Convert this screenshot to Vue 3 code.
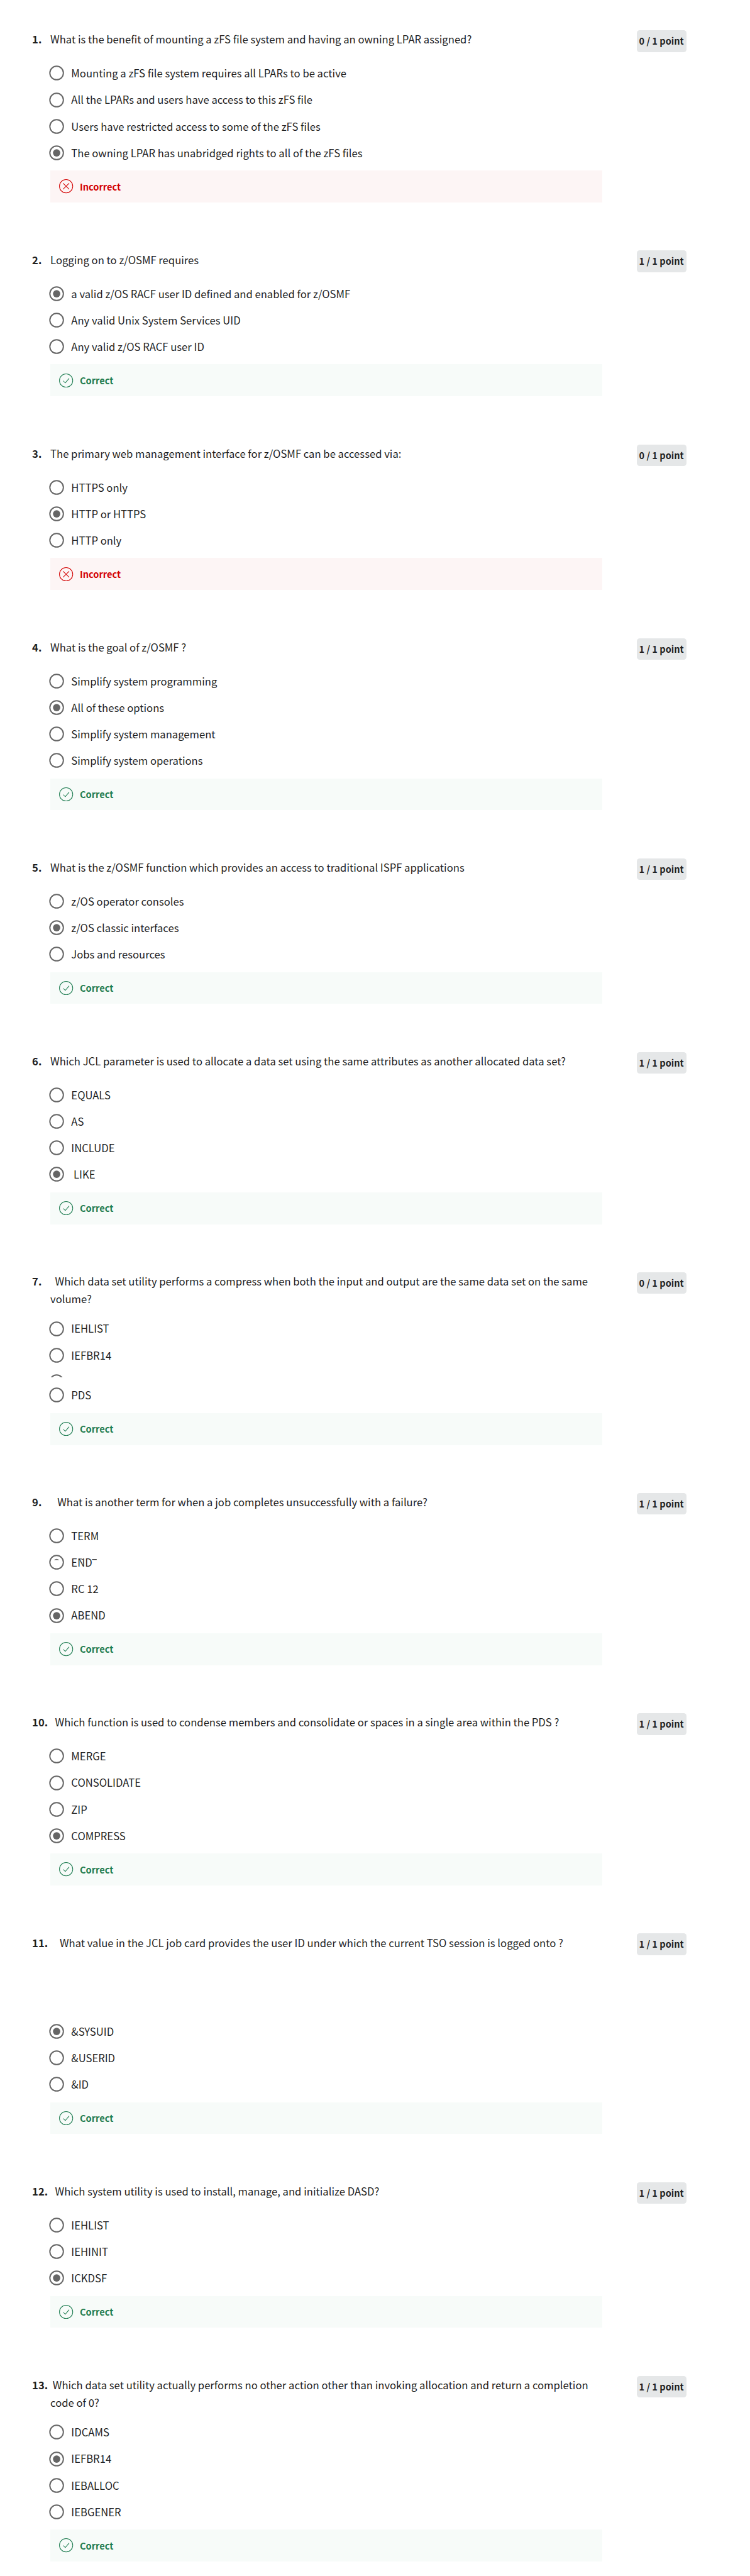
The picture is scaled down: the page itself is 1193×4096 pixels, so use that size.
<script setup>
const questions = [
  { n: 1, text: 'What is the benefit of mounting a zFS file system and having an owning LPAR assigned?', score: 0, picked: 3, ok: false,
    options: ['Mounting a zFS file system requires all LPARs to be active', 'All the LPARs and users have access to this zFS file', 'Users have restricted access to some of the zFS files', 'The owning LPAR has unabridged rights to all of the zFS files'] },
  { n: 2, text: 'Logging on to z/OSMF requires', score: 1, picked: 0, ok: true,
    options: ['a valid z/OS RACF user ID defined and enabled for z/OSMF', 'Any valid Unix System Services UID', 'Any valid z/OS RACF user ID'] },
  { n: 3, text: 'The primary web management interface for z/OSMF can be accessed via:', score: 0, picked: 1, ok: false,
    options: ['HTTPS only', 'HTTP or HTTPS', 'HTTP only'] },
  { n: 4, text: 'What is the goal of z/OSMF ?', score: 1, picked: 1, ok: true,
    options: ['Simplify system programming', 'All of these options', 'Simplify system management', 'Simplify system operations'] },
  { n: 5, text: 'What is the z/OSMF function which provides an access to traditional ISPF applications', score: 1, picked: 1, ok: true,
    options: ['z/OS operator consoles', 'z/OS classic interfaces', 'Jobs and resources'] },
  { n: 6, text: 'Which JCL parameter is used to allocate a data set using the same attributes as another allocated data set?', score: 1, picked: 3, ok: true,
    options: ['EQUALS', 'AS', 'INCLUDE', '\u00a0LIKE'] },
  { n: 7, text: '\u00a0\u00a0Which data set utility performs a compress when both the input and output are the same data set on the same volume?', score: 0, picked: -1, ok: true, cut: 2,
    options: ['IEHLIST', 'IEFBR14', '', 'PDS'] },
  { n: 9, text: '\u00a0\u00a0\u00a0What is another term for when a job completes unsuccessfully with a failure?', score: 1, picked: 3, ok: true, ghost: 1,
    options: ['TERM', 'END', 'RC 12', 'ABEND'] },
  { n: 10, text: '\u00a0\u00a0Which function is used to condense members and consolidate or spaces in a single area within the PDS ?', score: 1, picked: 3, ok: true,
    options: ['MERGE', 'CONSOLIDATE', 'ZIP', 'COMPRESS'] },
  { n: 11, text: '\u00a0\u00a0\u00a0\u00a0What value in the JCL job card provides the user ID under which the current TSO session is logged onto ?', score: 1, picked: 0, ok: true, spaced: true,
    options: ['&SYSUID', '&USERID', '&ID'] },
  { n: 12, text: '\u00a0\u00a0Which system utility is used to install, manage, and initialize DASD?', score: 1, picked: 2, ok: true,
    options: ['IEHLIST', 'IEHINIT', 'ICKDSF'] },
  { n: 13, text: '\u00a0Which data set utility actually performs no other action other than invoking allocation and return a completion code of 0?', score: 1, picked: 1, ok: true,
    options: ['IDCAMS', 'IEFBR14', 'IEBALLOC', 'IEBGENER'] },
]
</script>

<template>
  <main class="quiz">
    <section v-for="q in questions" :key="q.n" class="question">
      <header class="head">
        <span class="number">{{ q.n }}.</span>
        <p class="prompt">{{ q.text }}</p>
        <span class="badge">{{ q.score }} / 1 point</span>
      </header>
      <div class="body">
        <ul class="options" :class="{ spaced: q.spaced }">
          <li v-for="(o, i) in q.options" :key="i" class="option" :class="{ cut: q.cut === i }">
            <span class="row">
              <svg class="radio" viewBox="0 0 26 26">
                <circle cx="13" cy="13" r="11.6" fill="none" stroke="#666" stroke-width="2.1" />
                <circle v-if="q.picked === i" cx="13" cy="13" r="6.3" fill="#666" />
                <path v-if="q.ghost === i" d="M8.4 9.1 Q13 5.6 17.6 9.1 Z" fill="#666" />
              </svg>
              <span class="label">{{ o }}<svg v-if="q.ghost === i" class="ghost" viewBox="0 0 46 6">
                <path d="M12.5 3.4 Q16 .6 20.5 3 M36 2.8 H44" fill="none" stroke="#333" stroke-width="1.2" />
              </svg></span>
            </span>
          </li>
        </ul>
        <div class="result" :class="q.ok ? 'good' : 'bad'">
          <svg class="mark" viewBox="0 0 24 24" fill="none" stroke="currentColor" stroke-width="1.1">
            <circle cx="12" cy="12" r="11.4" />
            <path v-if="q.ok" d="M7 12.4 L10.6 16 L17.2 8.2" />
            <path v-else d="M6.8 6.8 L17.2 17.2 M17.2 6.8 L6.8 17.2" />
          </svg>
          <span>{{ q.ok ? 'Correct' : 'Incorrect' }}</span>
        </div>
      </div>
    </section>
  </main>
</template>

<style>
html {
  font-size: 9.29px;
  background: #fff;
}
</style>

<style scoped>
.quiz {
  width: 128.4rem;
  height: 4096px;
  overflow: hidden;
  box-sizing: border-box;
  padding-top: 5.2rem;
  font-family: "Noto Sans CJK SC", "Noto Sans", sans-serif;
  font-size: 1.793rem;
  color: #1f1f1f;
}
.question {
  padding-left: 5.5rem;
  margin-bottom: 8.233rem;
}
.head {
  display: flex;
  align-items: flex-start;
}
.number {
  width: 3.12rem;
  margin-top: 0.12rem;
  flex: none;
  font-weight: 700;
  line-height: 3rem;
  white-space: nowrap;
}
.prompt {
  margin: 0.12rem 0 -0.12rem;
  width: 94.5rem;
  line-height: 3rem;
}
.badge {
  margin-left: 5.88rem;
  width: 8.5rem;
  height: 3.7rem;
  line-height: 3.7rem;
  border-radius: 0.5rem;
  background: #e5e7e8;
  font-size: 1.57rem;
  font-weight: 700;
  text-align: center;
  white-space: nowrap;
}
.body {
  margin-left: 3.1rem;
  width: 94.5rem;
}
.options {
  list-style: none;
  margin: 0;
  padding: 1.38rem 0 0.786rem;
}
.options.spaced {
  padding-top: 10.78rem;
}
.option {
  height: 4.533rem;
}
.option.cut {
  height: 1.53rem;
  margin-bottom: 0.8rem;
  overflow: hidden;
}
.row {
  display: flex;
  align-items: center;
  height: 4.533rem;
}
.radio {
  width: 2.6rem;
  height: 2.6rem;
  margin-left: -0.2rem;
  flex: none;
}
.label {
  position: relative;
  margin-left: 1.2rem;
  padding-top: 0.16rem;
  line-height: 3rem;
  white-space: nowrap;
}
.ghost {
  position: absolute;
  left: 0;
  top: 0.8rem;
  width: 4.6rem;
  height: 0.6rem;
}
.result {
  display: flex;
  align-items: center;
  height: 5.467rem;
  box-sizing: border-box;
  padding-left: 1.57rem;
  font-size: 1.57rem;
  font-weight: 700;
  line-height: 3rem;
}
.result.good {
  background: #f7fbf9;
  color: #1d7c50;
}
.result.bad {
  background: #fdf5f5;
  color: #d30001;
}
.mark {
  width: 2.4rem;
  height: 2.4rem;
  margin-right: 1.1rem;
}
</style>
